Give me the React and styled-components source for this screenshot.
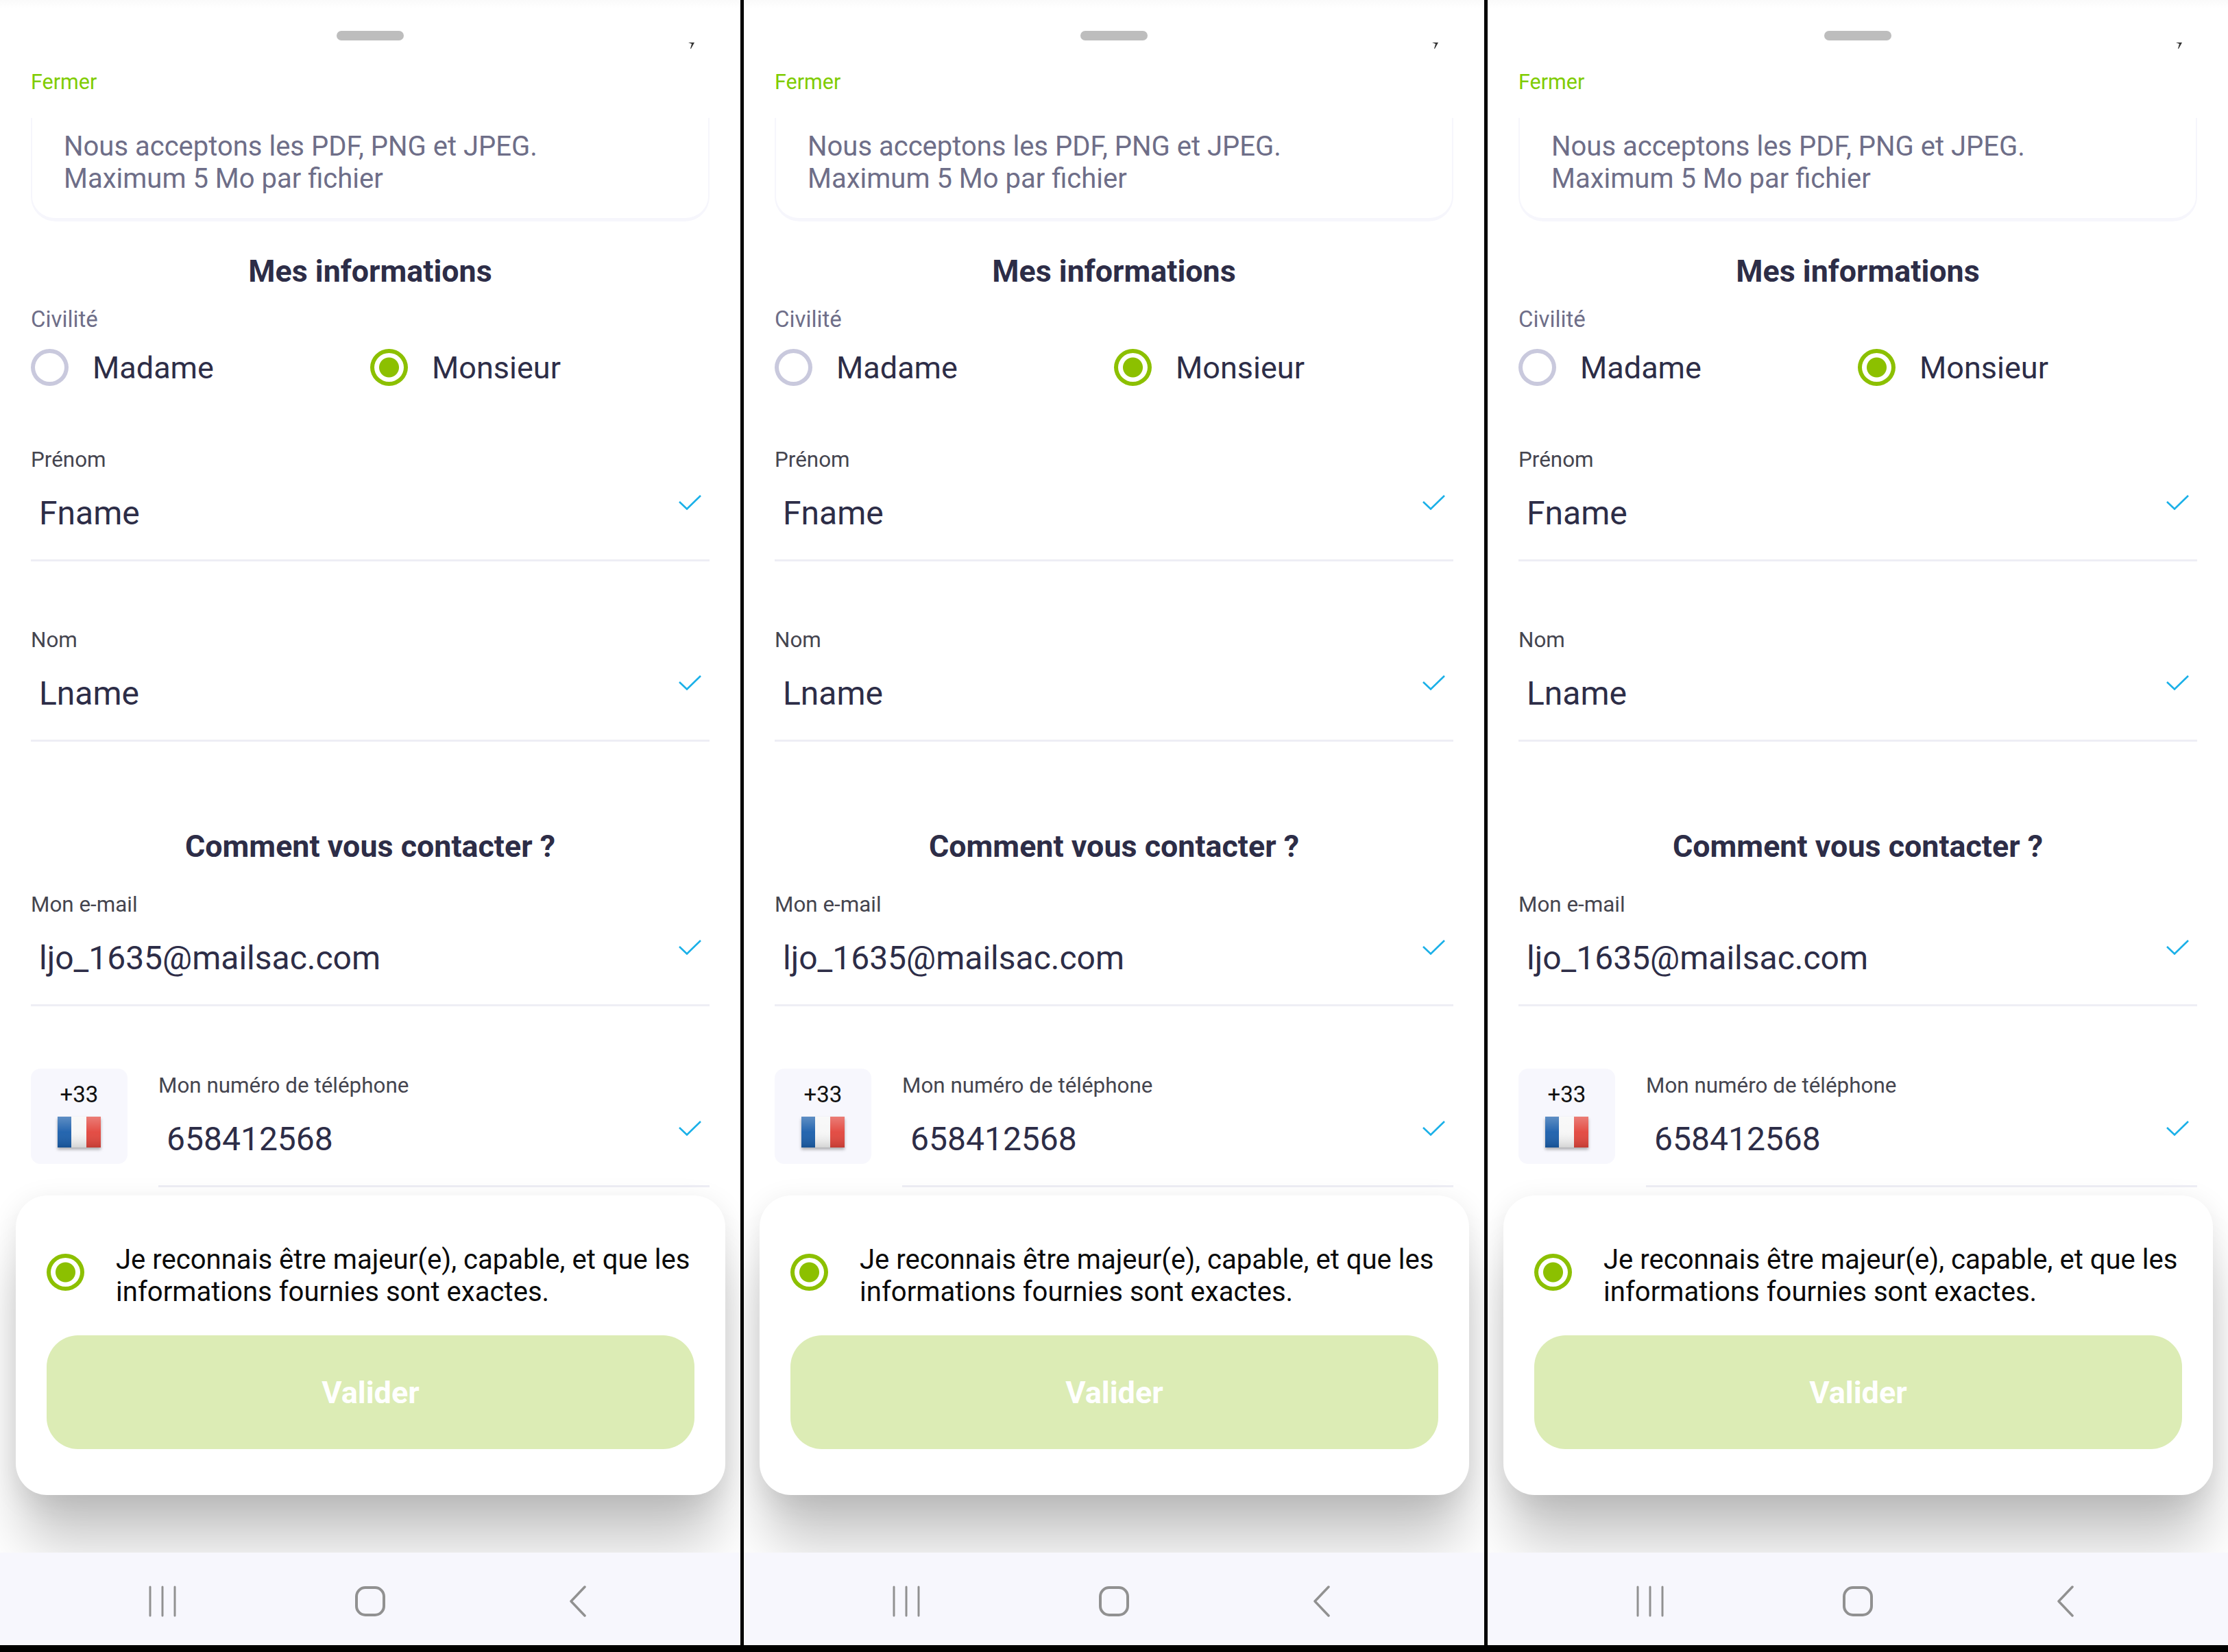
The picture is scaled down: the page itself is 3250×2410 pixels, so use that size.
import React from "react";
import styled, { createGlobalStyle } from "styled-components";

const Global = createGlobalStyle`
  html, body {
    margin: 0;
    background: #000;
  }
  * {
    box-sizing: border-box;
  }
`;

const Screens = styled.div`
  display: grid;
  grid-template-columns: repeat(3, 1080px);
  column-gap: 5px;
  width: 3250px;
  height: 2410px;
  font-family: Roboto, "Liberation Sans", sans-serif;
`;

const Phone = styled.div`
  position: relative;
  display: flex;
  flex-direction: column;
  height: 2400px;
  overflow: hidden;
  background: linear-gradient(#fafafa 0, #fff 12px);
`;

const Scroll = styled.div`
  flex: 1;
  display: flex;
  flex-direction: column;
  padding: 45px 45px 0;
`;

const Handle = styled.div`
  align-self: center;
  width: 98px;
  height: 14px;
  border-radius: 7px;
  background: #bdbdbd;
`;

const Speck = styled.svg`
  position: absolute;
  top: 61px;
  left: 1003px;
`;

const Close = styled.div`
  margin-top: 41px;
  font-size: 30.5px;
  line-height: 40px;
  color: #7fcc00;
`;

const InfoCard = styled.div`
  margin-top: 32px;
  height: 151px;
  padding: 18px 46px 0;
  border: 2px solid #f6f6fc;
  border-top: 0;
  border-bottom-width: 5px;
  border-radius: 0 0 36px 36px;
  font-size: 40px;
  line-height: 47px;
  color: #6e6e88;
`;

const Heading = styled.h2`
  margin: ${(p) => p.$top}px 0 0;
  font-size: 44.8px;
  font-weight: 700;
  line-height: 60px;
  text-align: center;
  color: #2d2d47;
`;

const Label = styled.div`
  font-size: 31.4px;
  line-height: 40px;
  color: #45454f;
`;

const CivilityLabel = styled(Label)`
  margin-top: 20px;
  font-size: 33px;
  color: #6e6e88;
`;

const RadioRow = styled.div`
  display: grid;
  grid-template-columns: 495px 1fr;
  margin-top: 23px;
  height: 54px;
`;

const RadioOption = styled.div`
  display: flex;
  align-items: center;
  gap: 35px;
  font-size: 45px;
  color: #2d2d47;
`;

const Radio = styled.div`
  flex: none;
  width: 55px;
  height: 54px;
  border-radius: 50%;
  border: 6px solid ${(p) => (p.$on ? "#8cc000" : "#c9c9dd")};
  background: ${(p) =>
    p.$on ? "radial-gradient(circle, #8cc000 0 14px, #fff 15px)" : "#fff"};
`;

const Field = styled.div`
  margin-top: ${(p) => p.$top}px;
  flex: ${(p) => (p.$grow ? 1 : "none")};
  height: 168px;
  border-bottom: 3px solid #eeeef5;
`;

const ValueRow = styled.div`
  display: flex;
  justify-content: space-between;
  align-items: flex-start;
  margin-top: 28px;
  padding: 0 12px;
  font-size: 48px;
  line-height: 60px;
  color: #2d2d47;
`;

const Check = styled.svg`
  margin-top: 3px;
`;

const PhoneRow = styled.div`
  display: flex;
  align-items: flex-start;
  gap: 45px;
  margin-top: 91px;
`;

const Dial = styled.div`
  flex: none;
  display: flex;
  flex-direction: column;
  align-items: center;
  width: 141px;
  height: 139px;
  padding-top: 20px;
  border-radius: 14px;
  background: #f7f7fd;
  font-size: 33px;
  line-height: 36px;
  color: #111;
`;

const Flag = styled.svg`
  margin-top: 14px;
  filter: drop-shadow(0 3px 2px rgba(0, 0, 0, 0.3)) blur(0.5px);
`;

const Sheet = styled.div`
  position: absolute;
  left: 23px;
  right: 22px;
  bottom: 219px;
  height: 437px;
  padding: 70px 45px 0;
  border-radius: 46px;
  background: #fff;
  box-shadow: 0 80px 80px -10px rgba(0, 0, 0, 0.22), 0 10px 40px rgba(0, 0, 0, 0.1);
`;

const Consent = styled.div`
  display: flex;
  gap: 46px;
  font-size: 40.1px;
  line-height: 47px;
  color: #0a0a0a;
`;

const ConsentRadio = styled(Radio)`
  margin-top: 15px;
`;

const Submit = styled.button`
  display: block;
  width: 945px;
  height: 166px;
  margin-top: 40px;
  border: 0;
  border-radius: 46px;
  background: #dcecb5;
  font-family: inherit;
  font-size: 45px;
  font-weight: 700;
  color: #fff;
`;

const NavBar = styled.div`
  position: relative;
  z-index: 1;
  flex: none;
  display: grid;
  grid-template-columns: repeat(3, 1fr);
  height: 135px;
  padding: 48px 0 0;
  background: #f7f7fd;
`;

const NavSlot = styled.div`
  display: flex;
  justify-content: ${(p) => p.$justify};
  padding: ${(p) => p.$pad};
`;

const Tick = () => (
  <Check width="33" height="22" viewBox="0 0 33 22" fill="none">
    <path d="M1 10 L12 20.5 L32 1" stroke="#1ab0e8" strokeWidth="2.6" />
  </Check>
);

const FranceFlag = () => (
  <Flag width="63" height="45" viewBox="0 0 63 45">
    <defs>
      <linearGradient id="gloss" x1="0" y1="0" x2="0" y2="1">
        <stop offset="0" stopColor="#fff" stopOpacity="0.3" />
        <stop offset="0.5" stopColor="#fff" stopOpacity="0.05" />
        <stop offset="1" stopColor="#000" stopOpacity="0.14" />
      </linearGradient>
    </defs>
    <rect width="20" height="45" fill="#1a5eab" />
    <rect x="20" width="22" height="45" fill="#f6f6f6" />
    <rect x="42" width="21" height="45" fill="#e2453c" />
    <rect width="63" height="45" fill="url(#gloss)" />
  </Flag>
);

const MenuIcon = () => (
  <svg width="40" height="46" viewBox="0 0 40 46" stroke="#919191" strokeWidth="3" strokeLinecap="round">
    <path d="M2 2 V44 M20 2 V44 M38 2 V44" />
  </svg>
);

const HomeIcon = () => (
  <svg width="46" height="46" viewBox="0 0 46 46" fill="none" stroke="#919191" strokeWidth="4">
    <rect x="3" y="3" width="40" height="40" rx="13" />
  </svg>
);

const BackIcon = () => (
  <svg width="26" height="46" viewBox="0 0 26 46" fill="none" stroke="#919191" strokeWidth="3.5" strokeLinecap="round" strokeLinejoin="round">
    <path d="M23 2 L3 23 L23 44" />
  </svg>
);

const FormField = ({ label, value, top, grow }) => (
  <Field $top={top} $grow={grow}>
    <Label>{label}</Label>
    <ValueRow>
      <span>{value}</span>
      <Tick />
    </ValueRow>
  </Field>
);

const Screen = () => (
  <Phone>
    <Scroll>
      <Handle />
      <Speck width="11" height="11" viewBox="0 0 11 11">
        <path d="M1 1 L10 1 L5 10 L4 10 L6 3 Z" fill="#333" />
      </Speck>
      <Close>Fermer</Close>
      <InfoCard>
        Nous acceptons les PDF, PNG et JPEG.
        <br />
        Maximum 5 Mo par fichier
      </InfoCard>
      <Heading $top={43}>Mes informations</Heading>
      <CivilityLabel>Civilité</CivilityLabel>
      <RadioRow>
        <RadioOption>
          <Radio />
          Madame
        </RadioOption>
        <RadioOption>
          <Radio $on />
          Monsieur
        </RadioOption>
      </RadioRow>
      <FormField top={88} label="Prénom" value="Fname" />
      <FormField top={95} label="Nom" value="Lname" />
      <Heading $top={123}>Comment vous contacter ?</Heading>
      <FormField top={35} label="Mon e-mail" value="ljo_1635@mailsac.com" />
      <PhoneRow>
        <Dial>
          +33
          <FranceFlag />
        </Dial>
        <FormField top={5} grow label="Mon numéro de téléphone" value="658412568" />
      </PhoneRow>
    </Scroll>
    <Sheet>
      <Consent>
        <ConsentRadio $on />
        <span>
          Je reconnais être majeur(e), capable, et que les informations fournies
          sont exactes.
        </span>
      </Consent>
      <Submit>Valider</Submit>
    </Sheet>
    <NavBar>
      <NavSlot $justify="flex-end" $pad="0 103px 0 0">
        <MenuIcon />
      </NavSlot>
      <NavSlot $justify="center" $pad="0">
        <HomeIcon />
      </NavSlot>
      <NavSlot $justify="flex-start" $pad="0 0 0 110px">
        <BackIcon />
      </NavSlot>
    </NavBar>
  </Phone>
);

const App = () => (
  <>
    <Global />
    <Screens>
      <Screen />
      <Screen />
      <Screen />
    </Screens>
  </>
);

export default App;
